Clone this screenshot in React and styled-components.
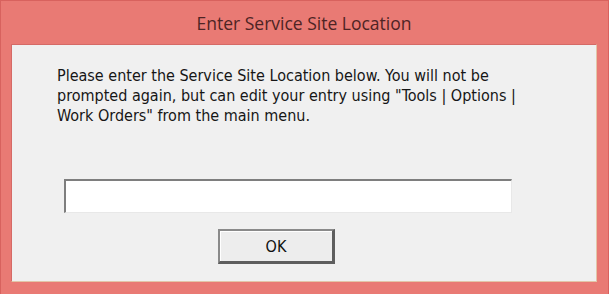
import styled, { createGlobalStyle } from 'styled-components'

const Global = createGlobalStyle`
  html, body {
    margin: 0;
    padding: 0;
    background: #e97a74;
  }
`

const Window = styled.div`
  box-sizing: border-box;
  width: 609px;
  height: 294px;
  display: flex;
  flex-direction: column;
  background: #e97a74;
  border: 1px solid #d8625e;
  border-bottom: none;
  padding: 0 11px 12px 10px;
`

const TitleBar = styled.div`
  height: 42px;
  display: flex;
  align-items: center;
  justify-content: center;
  font-family: 'Open Sans', 'Noto Sans', sans-serif;
  font-size: 17.5px;
  color: #4e2424;
  padding-top: 1px;
`

const Panel = styled.div`
  flex: 1;
  background: #f0f0f0;
  border-top: 1px solid #d56a66;
  border-left: 1px solid #d56a66;
  border-bottom: 1px solid #e2c6a8;
  border-right: 1px solid #e2c6a8;
  padding: 21px 0 0 45px;
  font-family: Tahoma, 'DejaVu Sans Condensed', 'DejaVu Sans', sans-serif;
  color: #161616;
`

const Message = styled.p`
  margin: 0;
  width: 470px;
  font-size: 16px;
  line-height: 20px;
`

const Entry = styled.input`
  display: block;
  box-sizing: border-box;
  width: 448px;
  height: 34px;
  margin: 53px 0 0 7px;
  background: #fff;
  border-style: solid;
  border-width: 2px 1px 1px 2px;
  border-color: #7e7e7e #e8e8e8 #e8e8e8 #7e7e7e;
  outline: none;
  padding: 0 6px;
  font: inherit;
`

const Button = styled.button`
  box-sizing: border-box;
  width: 117px;
  height: 35px;
  margin: 16px 0 0 161px;
  background: #ededed;
  border-style: solid;
  border-width: 2px 3px 3px 2px;
  border-color: #8a8a8a #5e5e5e #5e5e5e #8a8a8a;
  box-shadow: inset 1px 1px 0 #fff;
  font-family: Tahoma, 'DejaVu Sans Condensed', 'DejaVu Sans', sans-serif;
  font-size: 16px;
  color: #111;
  padding: 0;
`

export default function App() {
  return (
    <>
      <Global />
      <Window>
        <TitleBar>Enter Service Site Location</TitleBar>
        <Panel>
          <Message>
            Please enter the Service Site Location below. You will not be
            prompted again, but can edit your entry using "Tools | Options |
            Work Orders" from the main menu.
          </Message>
          <Entry type="text" />
          <Button type="button">OK</Button>
        </Panel>
      </Window>
    </>
  )
}
